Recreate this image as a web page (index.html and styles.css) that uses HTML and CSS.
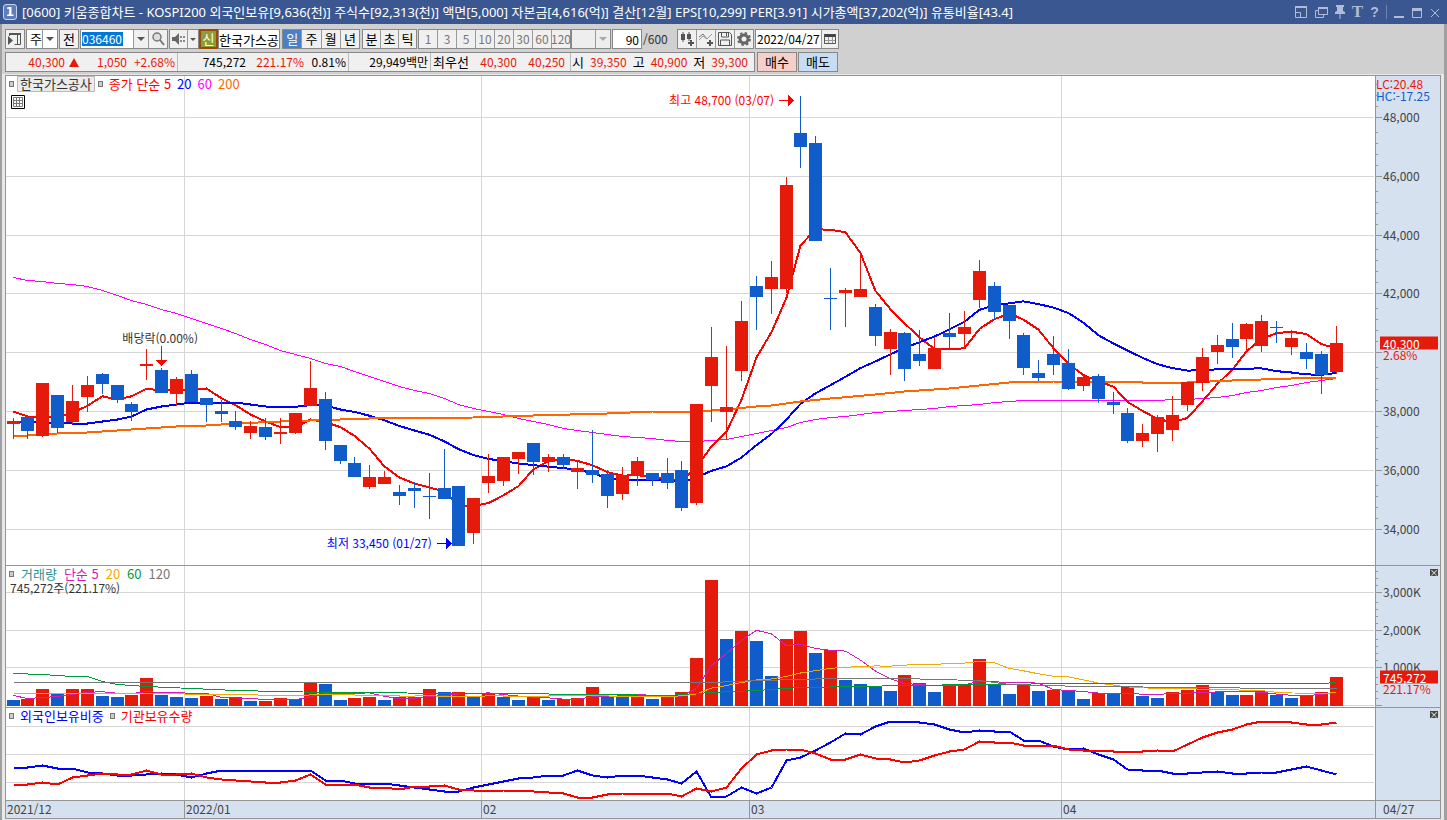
FILE: index.html
```html
<!DOCTYPE html>
<html lang="ko">
<head>
<meta charset="utf-8">
<title>[0600] 키움종합차트</title>
<link rel="stylesheet" href="styles.css">
</head>
<body>
<header class="titlebar">
  <span class="badge">1</span>
  <h1 class="title">[0600] 키움종합차트 - KOSPI200 외국인보유[9,636(천)] 주식수[92,313(천)] 액면[5,000] 자본금[4,616(억)] 결산[12월] EPS[10,299] PER[3.91] 시가총액[37,202(억)] 유통비율[43.4]</h1>
  <div class="window-buttons">
    <button aria-label="화면 축소"><svg width="14" height="14"><path d="M1.5 1.5h11v11h-11zM1.500 7.500h5v5" fill="none" stroke="currentColor"/><path d="M1 1h12v2H1z" fill="currentColor"/></svg></button>
    <button aria-label="화면 복사"><svg width="14" height="14"><path d="M4.500 2.500h9v7h-9zM4 5.500H1.500v7h8V10" fill="none" stroke="currentColor"/><path d="M4 2h10v2H4z" fill="currentColor"/></svg></button>
    <button aria-label="고정"><svg width="12" height="14"><path d="M2 0h8v2H9v4l2 1v2H1V7l2-1V2H2zM5.500 9h1v5h-1z" fill="currentColor"/></svg></button>
    <button aria-label="글꼴" class="glyph serif">T</button>
    <button aria-label="도움말" class="glyph">?</button>
    <span class="rule"></span>
    <button aria-label="최소화"><svg width="12" height="14"><path d="M1 11h10v2H1z" fill="currentColor"/></svg></button>
    <button aria-label="최대화"><svg width="12" height="14"><path d="M1.500 4.500h9v8h-9z" fill="none" stroke="currentColor"/><path d="M1 3h10v3H1z" fill="currentColor"/></svg></button>
    <button aria-label="닫기"><svg width="12" height="14"><path d="M2 4l8 8M10 4l-8 8" fill="none" stroke="currentColor"/></svg></button>
  </div>
</header>
<main class="frame">
  <div class="toolbar">
    <button class="box w20" aria-label="패널"><svg width="16" height="16"><path d="M2.500 2.500h11v11h-6M2.500 2v3M10.500 3v10" fill="none" stroke="#555"/><path d="M2 2h12v2H2zM1 5l5 4.500L1 14z" fill="#555"/></svg></button>
    <label class="box drop w33"><select aria-label="구분"><option>주</option></select><i class="caret"></i></label>
    <button class="box w20">전</button>
    <div class="box code"><input aria-label="종목코드" value="036460" class="code-input"><button class="caret-btn" aria-label="종목 목록"><i class="caret"></i></button><button class="icon-btn" aria-label="검색"><svg width="16" height="16"><circle cx="7" cy="6" r="4" fill="#ddd" stroke="#777" stroke-width="1.500"/><path d="M10 9l4 5" stroke="#777" stroke-width="2"/></svg></button></div>
    <div class="box sound"><button class="icon-btn" aria-label="소리"><svg width="16" height="16"><path d="M1 6h3l4-4v12L4 10H1z" fill="#666"/><path d="M9 5h2v2H9zM9 9h2v2H9zM12 5h2v2h-2zM12 9h2v2h-2z" fill="#888"/></svg></button><button class="caret-btn narrow" aria-label="소리 목록"><i class="caret small"></i></button></div>
    <span class="new">신</span>
    <input class="box name" aria-label="종목명" value="한국가스공사">
    <div class="group period"><button class="on">일</button><button>주</button><button>월</button><button>년</button></div>
    <div class="group tickers"><button>분</button><button>초</button><button>틱</button></div>
    <div class="group nums"><button>1</button><button>3</button><button>5</button><button>10</button><button>20</button><button>30</button><button>60</button><button>120</button></div>
    <label class="box drop w40 off"><select aria-label="주기" disabled><option></option></select><i class="caret"></i></label>
    <input class="box count" aria-label="표시 개수" value="90">
    <span class="total">/600</span>
    <div class="group tools">
      <button aria-label="지표 추가"><svg width="16" height="16"><path d="M2 3h4v6H2zM3.500 1h1v10h-1zM8 3h4v5H8zM9.500 1h1v9h-1zM11 9h2v6h-2zM9 11h6v2H9z" fill="#555"/></svg></button>
      <button aria-label="선 추가"><svg width="16" height="16"><path d="M1 6l4-3 4 5 5-5" fill="none" stroke="#777"/><path d="M1 9l4-4 4 3 5-5" fill="none" stroke="#999"/><path d="M11 9h2v6h-2zM9 11h6v2H9z" fill="#555"/></svg></button>
      <button aria-label="저장"><svg width="16" height="16"><path d="M1.500 1.500h11l2 2v11h-13zM4.500 2v4h7V2M3.500 14V9h9v5M9.500 2v3" fill="none" stroke="#555"/></svg></button>
      <button aria-label="설정"><svg width="16" height="16"><circle cx="8" cy="8" r="4" fill="none" stroke="#666" stroke-width="3"/><circle cx="8" cy="8" r="6" fill="none" stroke="#666" stroke-width="2" stroke-dasharray="2.400 2.312"/></svg></button>
    </div>
    <div class="box date"><input aria-label="날짜" value="2022/04/27"><button class="icon-btn" aria-label="달력"><svg width="14" height="14"><path d="M1.500 2.500h11v9h-11zM5.500 5v7M9.500 5v7M1 8.500h12" fill="none" stroke="#999"/><path d="M1 2h12v3H1z" fill="#444"/><path d="M1.500 2v9.500h11V2" fill="none" stroke="#555"/></svg></button></div>
  </div>
  <div class="quotes">
    <div class="quote-box">
      <div class="cell up c1"><span class="n1">40,300</span><i class="rise"></i><span class="n2">1,050</span><span class="n2">+2.68%</span></div>
      <div class="cell c2"><span class="n3">745,272</span><span class="up n4">221.17%</span><span class="n5">0.81%</span></div>
      <div class="cell c3"><span>29,949백만</span></div>
      <div class="cell c4"><span class="label">최우선</span><span class="up">40,300</span><span class="up">40,250</span></div>
      <div class="cell c5"><span class="label">시</span><span class="up">39,350</span><span class="label">고</span><span class="up">40,900</span><span class="label">저</span><span class="up">39,300</span></div>
    </div>
    <button class="trade buy">매수</button>
    <button class="trade sell">매도</button>
  </div>
  <section class="chart">
    <div class="panel">
      <svg id="price" viewBox="6 76 1369 489" preserveAspectRatio="none"></svg>
      <div class="legend"><i class="knob"></i><span class="stock">한국가스공사</span><i class="knob"></i><span class="red">종가 단순 5</span><span class="blue">20</span><span class="pink">60</span><span class="orange">200</span></div>
      <button class="grid-btn" aria-label="표"><svg width="14" height="14"><path d="M.5.500h13v13H.5z" fill="#fff" stroke="#000"/><path d="M2.500 2.500h9v9h-9zM2 5.500h10M2 8.500h10M5.500 3v9M8.500 3v9" fill="none" stroke="#777"/></svg></button>
      <span class="note high">최고 48,700 (03/07)</span>
      <span class="note low">최저 33,450 (01/27)</span>
      <span class="note dividend">배당락(0.00%)</span>
    </div>
    <div class="axis" id="price-axis">
      <div class="extremes"><span class="up">LC:20.48</span><span class="down">HC:-17.25</span></div>
    </div>
    <div class="panel">
      <svg id="volume" viewBox="6 566 1369 141" preserveAspectRatio="none"></svg>
      <div class="legend wide"><i class="knob"></i><span class="teal">거래량</span><span class="violet">단순 5</span><span class="gold">20</span><span class="green">60</span><span class="gray">120</span></div>
      <span class="volume-now">745,272주(221.17%)</span>
    </div>
    <div class="axis" id="volume-axis"><button class="close" aria-label="닫기">×</button></div>
    <div class="panel">
      <svg id="holding" viewBox="6 708 1369 92" preserveAspectRatio="none"></svg>
      <div class="legend"><i class="knob"></i><span class="blue">외국인보유비중</span><i class="knob"></i><span class="red">기관보유수량</span></div>
    </div>
    <div class="axis"><button class="close" aria-label="닫기">×</button></div>
    <div class="months"><span>2021/12</span><span>2022/01</span><span>02</span><span>03</span><span>04</span></div>
    <div class="today">04/27</div>
  </section>
</main>
<script src="chart.js"></script>
</body>
</html>
```
FILE: styles.css
```css
* { box-sizing: border-box; }
body {
  margin: 0;
  min-height: 100vh;
  display: flex;
  flex-direction: column;
  background: #e4e4e4;
  color: #000;
  font: 13px/16px "Noto Sans CJK KR", sans-serif;
}
button, input, select { font: inherit; color: inherit; margin: 0; padding: 0; border: 0; background: none; border-radius: 0; }
button { display: flex; align-items: center; justify-content: center; }
svg { display: block; flex: none; }

.titlebar { display: flex; align-items: center; height: 24px; padding: 0 6px 0 3px; background: #3a5791; color: #fff; }
.badge { width: 14px; height: 16px; border: 1px solid #c9d5ee; border-radius: 3px; background: #5f7db8; font: bold 12px/14px "DejaVu Sans", sans-serif; text-align: center; }
.title { flex: 1; margin: 0 0 0 5px; font: 13px/20px "Noto Sans", "Noto Sans CJK KR", sans-serif; white-space: nowrap; }
.window-buttons { display: flex; align-items: center; gap: 6px; color: #b0bcd8; }
.glyph { width: 11px; font: bold 14px/16px "Liberation Sans", sans-serif; }
.serif { font-family: "Liberation Serif", serif; font-size: 17px; }
.rule { width: 1px; height: 14px; background: #6f86b5; }

.frame { flex: 1; display: flex; flex-direction: column; padding: 5px 3px 1px 3px; border-left: 2px solid #a0a0a0; border-right: 3px solid #a0a0a0; background: linear-gradient(#d0d0d0 50px, #e8e8e8 50px); }
.toolbar, .quotes { display: flex; height: 20px; margin-bottom: 3px; }
.box { height: 20px; border: 1px solid #888; background: #f0f0f0; margin-right: 1px; flex: none; }
.w20 { width: 20px; }
.w33 { width: 32px; }
.w40 { width: 40px; }
.drop { position: relative; display: flex; background: #fff; }
.drop select { appearance: none; width: 100%; padding-left: 3px; line-height: 18px; }
.drop .caret { position: absolute; right: 3px; top: 7px; }
.drop::after { content: ""; position: absolute; right: 14px; top: 0; bottom: 0; border-left: 1px solid #999; }
.off { background: #eee; }
.off .caret { border-top-color: #aaa; }
.caret { width: 0; height: 0; border: 4px solid transparent; border-top: 4px solid #555; border-bottom: 0; }
.small { border-width: 3px; border-bottom: 0; }
.code { display: flex; width: 88px; background: #fff; }
.code-input { width: 41px; height: 14px; margin: 2px auto 0 1px; background: #0078d7; color: #fff; font-size: 12px; }
.caret-btn { width: 15px; border-left: 1px solid #999; background: #f0f0f0; }
.narrow { width: 11px; }
.icon-btn { width: 19px; border-left: 1px solid #999; background: #f0f0f0; }
.sound { display: flex; width: 30px; margin: 0; }
.sound .icon-btn { border-left: 0; width: 17px; }
.new { width: 19px; height: 20px; border: 2px solid #984c08; background: #8a9e38; color: #fff; text-align: center; }
.name { width: 62px; margin-right: 2px; background: #fff; }
.group { display: flex; height: 20px; border: 1px solid #888; background: #f0f0f0; }
.group button { flex: 1; border-left: 1px solid #999; }
.group button:first-child { border-left: 0; }
.group .on { background: #4a80c4; color: #fff; }
.period { width: 78px; margin-right: 2px; }
.tickers { width: 55px; margin-right: 1px; }
.nums { width: 153px; color: #777; font-size: 12px; }
.nums button { flex: 1 1 0; min-width: 0; }
.count { width: 30px; margin: 0; padding-right: 2px; background: #fff; font-size: 12px; text-align: right; }
.total { width: 35px; padding-left: 1px; color: #333; font-size: 12px; line-height: 20px; }
.tools { width: 77px; margin-right: 1px; }
.date { display: flex; width: 84px; background: #fff; font-size: 12px; }
.date input { width: 65px; padding-left: 1px; }
.date .icon-btn { width: 17px; }

.quote-box { display: flex; width: 750px; border: 1px solid #888; background: #f0f0f0; font-size: 12px; line-height: 18px; white-space: nowrap; }
.label { font-size: 13px; }
.cell { display: flex; border-left: 1px solid #bbb; padding-right: 2px; text-align: right; justify-content: flex-end; }
.cell:first-child { border-left: 0; }
.up { color: #e61a0a; }
.down { color: #115ccb; }
.c1 { width: 171px; }
.c2 { width: 171px; }
.c3 { width: 82px; }
.c4 { width: 140px; justify-content: space-between; padding: 0 5px 0 2px; }
.c5 { flex: 1; justify-content: space-between; padding: 0 6px 0 1px; }
.n2 { width: 48px; }
.n4 { width: 58px; }
.n5 { width: 42px; }
.rise { width: 0; height: 0; margin: 5px 0 0 4px; border: 5px solid transparent; border-bottom: 9px solid #e61a0a; border-top: 0; }
.trade { width: 40px; margin-left: 2px; border: 1px solid #888; }
.buy { background: #f5cfca; }
.sell { background: #c6ddf3; margin-left: 1px; }

.chart { flex: 1; display: grid; grid-template: 490fr 142fr 93fr 17px / 1fr 65px; border: 1px solid #959595; background: #fff; }
.panel { position: relative; min-height: 0; border-bottom: 1px solid #959595; }
.panel > svg { position: absolute; width: 100%; height: 100%; shape-rendering: crispEdges; }
.axis { position: relative; border-left: 1px solid #959595; border-bottom: 1px solid #959595; background: #d6e1ef; color: #444; font-size: 12px; }
.legend { position: absolute; left: 3px; top: 0; display: flex; align-items: center; gap: 6px; white-space: nowrap; }
.wide { gap: 7px; }
.knob { width: 5px; height: 6px; border: 1px solid #777; background: #ccc; }
.stock { margin: 0 -3px; padding: 0 2px; line-height: 14px; border: 1px solid #bbb; background: #ebebeb; color: #333; }
.red { color: #f00; }
.blue { color: #00f; }
.pink { color: #f0f; }
.orange { color: #f60; }
.teal { color: #2e8f93; }
.violet { color: #d31cb8; }
.gold { color: #f2a900; }
.green { color: #009a3c; }
.gray { color: #777; }
.grid-btn { position: absolute; left: 5px; top: 19px; }
.note { position: absolute; white-space: nowrap; transform: translateY(-50%); font-size: 12px; }
.high { right: 43.9%; top: 4.9%; color: #f00; }
.low { right: 68.9%; top: 95.5%; color: #00f; }
.dividend { left: 8.5%; top: 53.6%; color: #333; }
.volume-now { position: absolute; left: 4px; top: 14px; color: #333; font-size: 12px; }
.extremes { display: flex; flex-direction: column; line-height: 12px; padding-top: 2px; }
.tick { position: absolute; left: 0; width: 2px; height: 1px; background: #959595; }
.tick.major { width: 6px; }
.value { position: absolute; left: 7px; line-height: 12px; transform: translateY(-50%); }
.tag { left: 4px; right: 2px; padding-left: 3px; line-height: 13px; background: #e61a0a; color: #fff; }
.close { position: absolute; right: 2px; top: 3px; width: 8px; height: 7px; background: #444; color: #fff; font-size: 9px; line-height: 7px; }
.months { display: grid; grid-template-columns: 178fr 297fr 268fr 312fr 314fr; background: #d6e1ef; color: #444; font-size: 12px; }
.months span { padding-left: 1px; }
.months span + span { border-left: 1px solid #959595; }
.today { padding-left: 7px; border-left: 1px solid #959595; background: #d6e1ef; color: #444; font-size: 12px; }
```
FILE: chart.js
```js
const RED = '#e61a0a', BLUE = '#115ccb', GRID = '#d6d6d6';
const MONTHS = [184, 481, 749, 1061];

// colour, body top, body bottom, high, low
const candles = `r 421 424 418 439,b 417 431 415 439,r 383 436 383 437,b 395 428 395 433,r 401 422 385 424,r 385 397 376 412,b 374 384 373 394,b 385 400 385 403,b 404 412 402 421,r 364 366 349 380,b 370 393 368 393,r 379 394 377 406,b 374 402 370 402,b 398 405 398 422,b 411 414 400 422,b 421 427 411 430,r 426 433 421 439,b 427 437 418 440,r 432 434 418 444,r 413 433 413 434,r 388 406 361 406,b 399 441 392 450,b 445 461 445 464,b 463 477 457 477,r 477 487 465 489,r 477 484 471 484,b 492 496 485 505,b 488 491 482 508,b 496 497 473 519,b 488 499 449 499,b 486 546 486 546,r 498 533 498 544,r 476 483 454 493,r 457 481 457 486,r 452 459 452 474,b 443 462 443 475,r 457 462 454 472,b 457 465 454 469,r 468 472 460 489,b 470 475 430 483,b 474 496 470 508,r 475 494 467 500,r 461 476 457 486,b 473 480 473 486,b 473 483 458 489,b 470 508 461 511,r 404 503 404 505,r 357 386 327 422,r 407 412 346 439,r 321 371 301 381,b 286 297 276 330,r 277 289 261 314,r 185 289 177 293,b 133 147 96 168,b 143 241 136 241,b 298 299 268 330,r 290 293 288 327,r 289 297 254 297,b 307 336 304 346,r 332 349 329 375,b 333 369 332 381,b 354 361 330 366,r 348 369 337 369,b 333 337 313 349,r 327 334 311 349,r 271 300 260 308,b 286 312 282 319,b 305 321 305 339,b 335 368 333 375,b 373 378 360 381,b 354 365 336 375,b 363 389 349 390,r 377 386 375 391,b 376 399 374 403,b 402 405 392 414,b 413 441 408 443,r 433 441 424 447,r 417 434 415 452,r 415 430 396 441,r 382 405 382 411,r 357 383 348 391,r 345 352 335 364,b 339 347 323 358,r 324 339 323 352,r 321 346 315 352,b 327 328 321 343,r 338 347 330 355,b 352 359 343 369,b 354 375 351 394,r 343 372 326 374`
  .split(',').map(row => row.split(' ').map((v, i) => i ? +v : v));

const volumes = `b700 r699 r689 b693 r689 r689 b696 b697 r695 r678 b695 b697 b698 r696 b699 r697 b701 r701 r698 b699 r683 b684 b700 r698 r697 b700 r697 r697 r689 b692 r692 b696 r693 b697 b700 r697 b700 r699 r698 r687 b696 b696 r695 b699 r696 r692 r658 r580 b639 r631 b641 b676 r639 r631 b653 r650 b680 b684 b686 b691 r675 b683 b692 r686 r685 r659 b685 b694 r685 b691 r690 b690 b699 r693 b694 r687 b696 b698 r692 r690 r685 b692 b695 r695 r691 b695 b698 r695 r692 r677`
  .split(' ').map(v => [v[0], +v.slice(1)]);

const ma60 = [277,280,281,283,284,286,290,295,300,304,309,313,318,323,328,333,339,344,350,354,358,363,366,371,376,381,386,390,393,398,404,408,411,414,418,421,424,428,430,432,434,436,437,438,440,441,441,440,439,436,433,430,427,422,419,417,416,414,412,411,410,409,408,406,405,404,402,401,400,400,400,400,400,400,400,400,400,400,399,399,398,397,395,392,390,387,385,382,380,378];
const ma200 = [[0,436],[1,435],[3,433],[5,432],[8,429],[11,426],[13,425],[15,423],[18,421],[22,419],[24,418],[31,417],[35,415],[40,413],[43,411],[46,411],[48,409],[50,406],[51,405],[53,401],[55,398],[58,394],[60,391],[63,388],[65,385],[67,382],[70,381],[75,381],[76,382],[79,382],[82,380],[84,379],[86,378],[89,377]];
const volMa60 = [[0,673],[2,674],[4,676],[5,676],[6,681],[7,684],[9,686],[12,688],[15,690],[18,691],[21,692],[32,693],[40,694],[44,695],[47,692],[50,690],[53,687],[57,686],[60,685],[65,684],[72,683],[88,683],[89,682]];
const volMa120 = [[0,682],[47,682],[50,680],[53,679],[55,678],[60,678],[62,679],[65,680],[67,684],[72,686],[80,687],[85,688],[89,688]];
const foreign = [767,767,765,768,768,772,773,775,775,774,773,774,777,773,770,770,770,770,770,770,770,780,780,783,783,783,785,787,789,791,791,787,784,781,778,777,775,775,770,775,777,775,775,777,779,783,771,797,796,787,793,787,760,757,750,742,733,734,726,721,721,722,724,729,732,730,731,731,740,740,746,749,748,754,759,769,770,770,773,773,772,771,773,773,772,772,769,766,770,774];
const institution = [784,784,782,784,777,775,773,774,774,770,774,774,773,777,779,780,781,782,782,780,774,784,784,784,787,787,789,786,786,785,789,790,791,790,790,791,792,793,797,797,794,793,793,793,793,796,788,791,787,768,754,750,749,749,753,759,759,754,758,759,762,760,755,751,749,741,742,742,745,745,745,749,750,750,751,751,751,750,751,744,737,732,729,724,721,721,722,724,724,722];

const centre = i => Math.floor(13 + 14.866 * i);
const rect = (x, y, w, h, fill) => `<rect x="${x}" y="${y}" width="${w}" height="${h}" fill="${fill}"/>`;
const indexed = values => values.map((y, i) => [i, y]);
const line = (points, color, width) =>
  `<polyline fill="none" stroke="${color}" stroke-width="${width}" points="${points.map(([i, y]) => `${centre(i) + .5},${y + .5}`).join(' ')}"/>`;

// Simple moving average; the first values come from sessions before the visible range.
const average = (values, span, lead) => indexed(values.map((_, i) =>
  i < span - 1 ? lead[i] : values.slice(i - span + 1, i + 1).reduce((a, b) => a + b) / span));

const grid = (rows, top, height) =>
  rows.map(y => rect(6, y, 1368, 1, GRID)).join('') + MONTHS.map(x => rect(x, top, 1, height, GRID)).join('');

const closes = candles.map(([c, top, bottom]) => c === 'r' ? top : bottom - 1);
const priceRows = [117, 176, 235, 293, 352, 411, 470, 529];
document.getElementById('price').innerHTML =
  grid(priceRows, 76, 489) +
  line(indexed(ma60), '#f0f', 1) +
  line(average(closes, 5, [411, 416, 416, 416]), '#f00', 2) +
  line(average(closes, 20, [421,421,422,422,423,423,421,419,416,409,406,404,402,402,402,402,404,406,407]), '#00f', 2) +
  line(ma200, '#f60', 2) +
  candles.map(([c, top, bottom, high, low], i) => {
    const color = c === 'r' ? RED : BLUE, x = centre(i);
    return rect(x, high, 1, low - high, color) + rect(x - 6, top, 13, bottom - top, color);
  }).join('') +
  '<path d="M779 100h9v-5l6 5.500-6 5.500v-5h-9zM161 346h1v14h5l-5.500 6-5.500-6h5z" fill="#f00"/>' +
  '<path d="M437 543h9v-5l6 5.500-6 5.500v-5h-9z" fill="#00f"/>';

const volumeRows = [592, 630, 667, 705];
const levels = volumes.map(v => v[1]);
document.getElementById('volume').innerHTML =
  grid(volumeRows, 566, 141) +
  volumes.map(([c, y], i) => rect(centre(i) - 6, y, 13, 706 - y, c === 'r' ? RED : BLUE)).join('') +
  line(average(levels, 5, [695, 698, 697, 696]), '#d31cb8', 1) +
  line(average(levels, 20, [693,693,693,693,693,693,693,693,693,693,693,693,694,694,694,694,694,695,695]), '#f2a900', 1) +
  line(volMa60, '#009a3c', 1) +
  line(volMa120, '#777', 1);

document.getElementById('holding').innerHTML =
  grid([726, 754, 782], 708, 92) + line(indexed(foreign), '#00f', 2) + line(indexed(institution), '#f00', 2);

function fillAxis(id, top, height, rows, step, labels, tags) {
  const at = y => `top:${((y - top) / height * 100).toFixed(2)}%`;
  let html = '';
  rows.forEach((y, n) => {
    html += `<i class="tick major" style="${at(y)}"></i>`;
    for (let k = 1; k < 5; k++) if (y - k * step > top + 4) html += `<i class="tick" style="${at(y - k * step)}"></i>`;
    if (labels[n]) html += `<span class="value" style="${at(y)}">${labels[n]}</span>`;
  });
  tags.forEach(([y, text, cls]) => html += `<span class="value ${cls}" style="${at(y)}">${text}</span>`);
  document.getElementById(id).insertAdjacentHTML('beforeend', html);
}
fillAxis('price-axis', 76, 489, priceRows, 11,
  ['48,000', '46,000', '44,000', '42,000', '', '38,000', '36,000', '34,000'],
  [[342.5, '40,300', 'tag'], [355, '2.68%', 'up']]);
fillAxis('volume-axis', 566, 141, volumeRows, 7,
  ['3,000K', '2,000K', '1,000K', ''],
  [[676.5, '745,272', 'tag'], [689, '221.17%', 'up']]);
```
